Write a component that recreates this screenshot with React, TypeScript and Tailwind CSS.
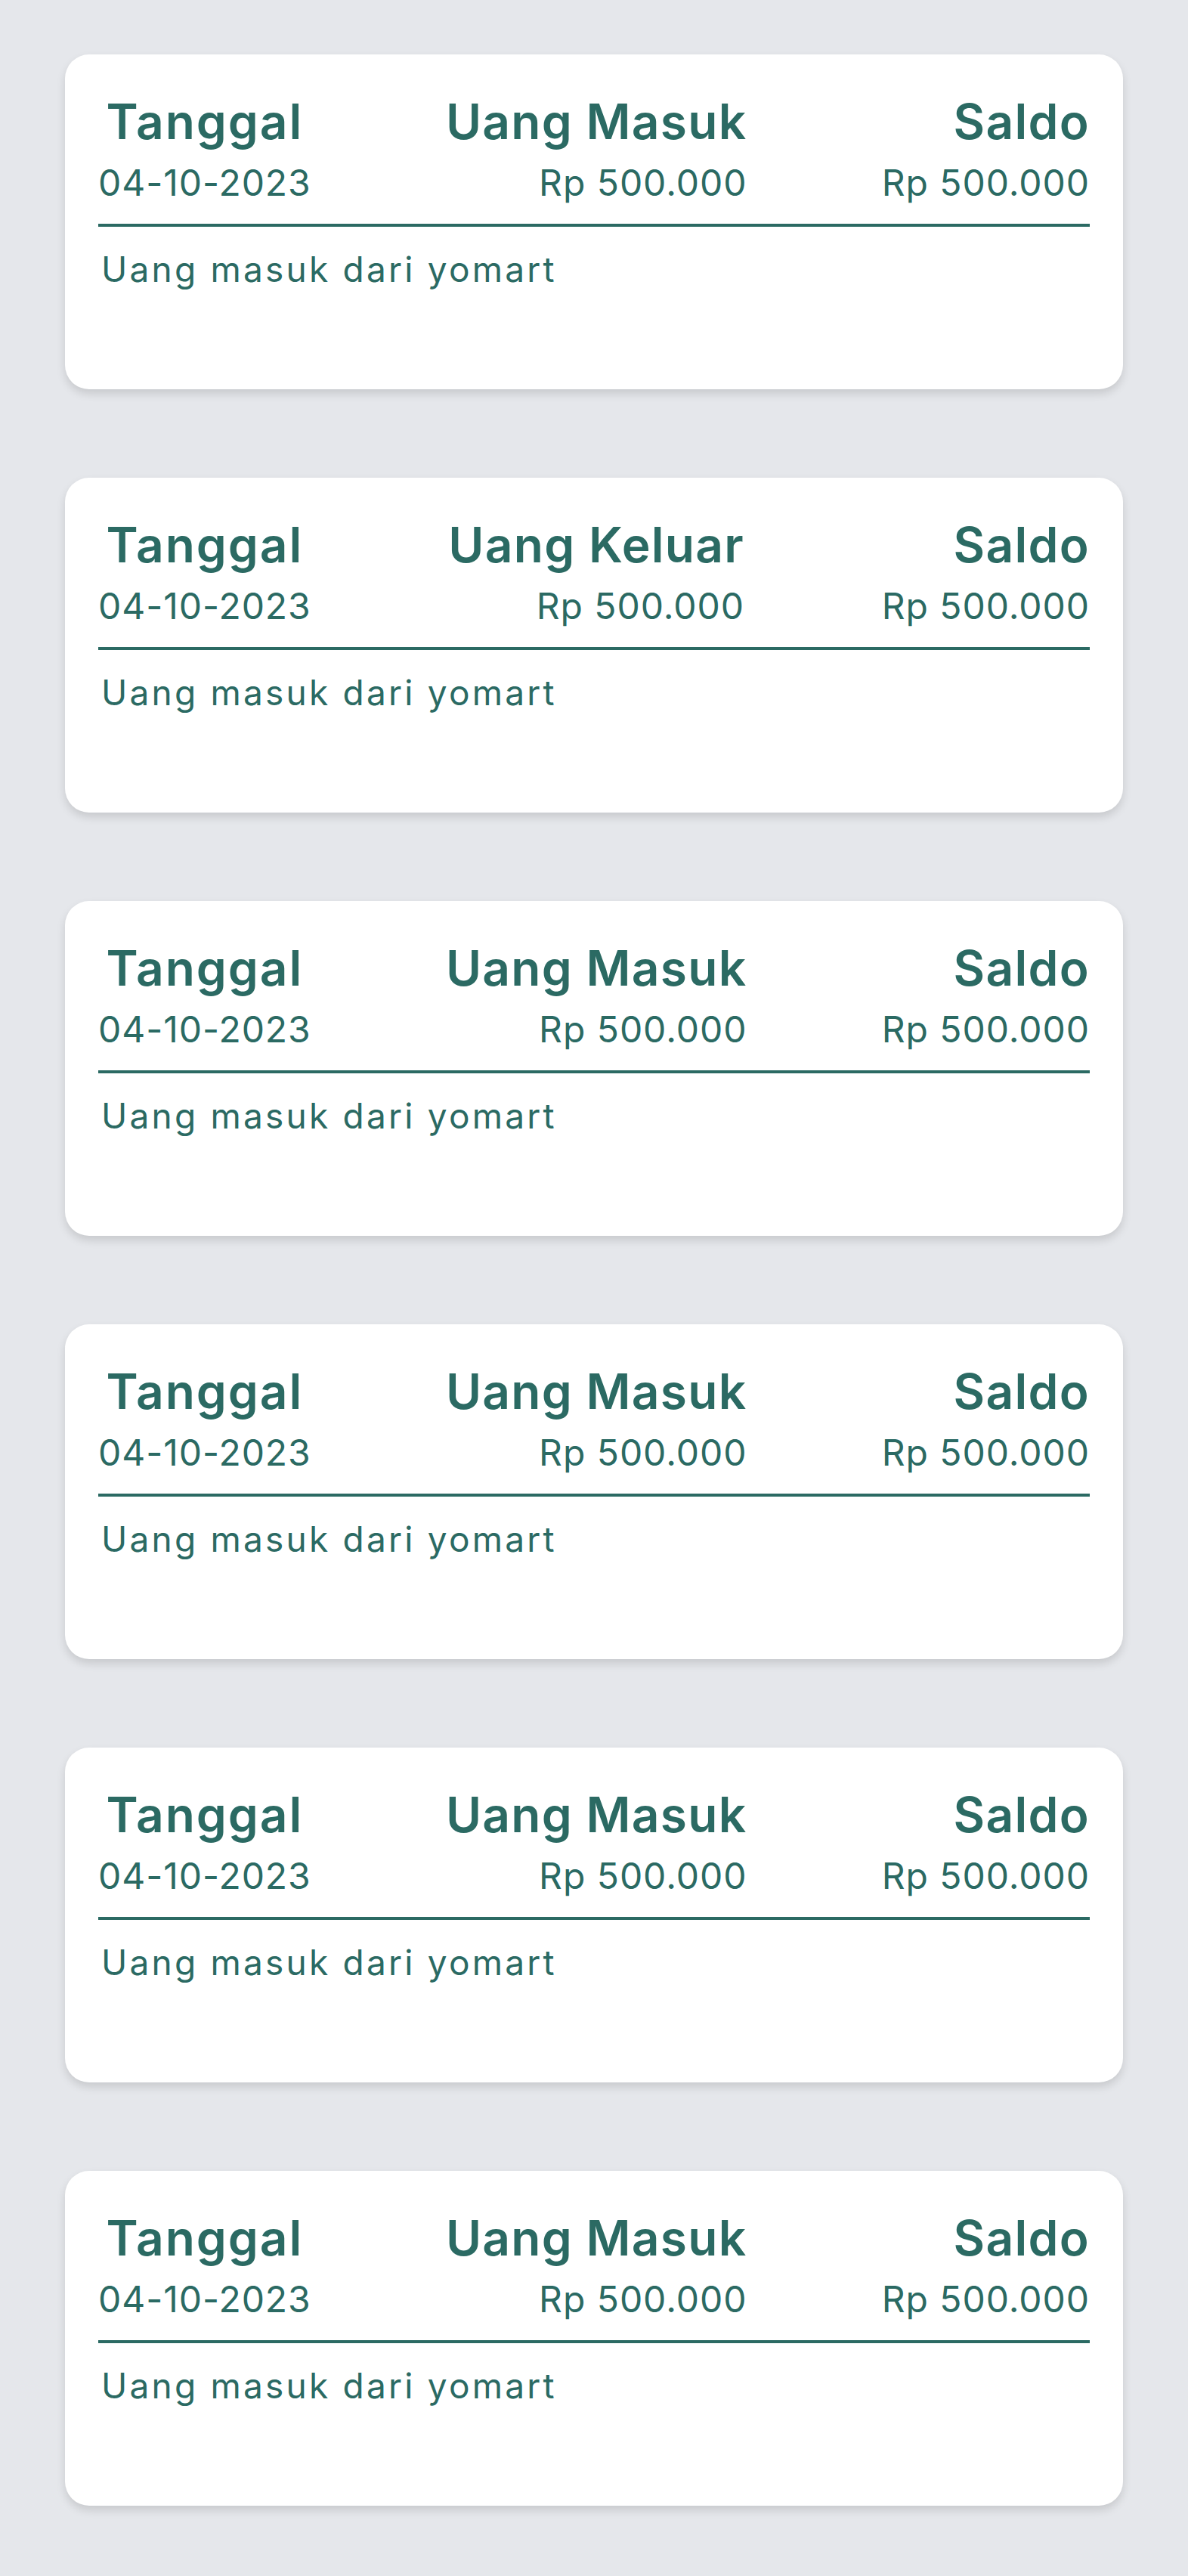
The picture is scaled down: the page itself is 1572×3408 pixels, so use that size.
import React from 'react';

const transaksi = [
  { tanggal: '04-10-2023', jenis: 'Uang Masuk', jumlah: 'Rp 500.000', saldo: 'Rp 500.000', ket: 'Uang masuk dari yomart' },
  { tanggal: '04-10-2023', jenis: 'Uang Keluar', jumlah: 'Rp 500.000', saldo: 'Rp 500.000', ket: 'Uang masuk dari yomart' },
  { tanggal: '04-10-2023', jenis: 'Uang Masuk', jumlah: 'Rp 500.000', saldo: 'Rp 500.000', ket: 'Uang masuk dari yomart' },
  { tanggal: '04-10-2023', jenis: 'Uang Masuk', jumlah: 'Rp 500.000', saldo: 'Rp 500.000', ket: 'Uang masuk dari yomart' },
  { tanggal: '04-10-2023', jenis: 'Uang Masuk', jumlah: 'Rp 500.000', saldo: 'Rp 500.000', ket: 'Uang masuk dari yomart' },
  { tanggal: '04-10-2023', jenis: 'Uang Masuk', jumlah: 'Rp 500.000', saldo: 'Rp 500.000', ket: 'Uang masuk dari yomart' },
];

const App = () => {
  return (
    <div className="min-h-screen bg-[#e5e7eb] px-[86px] pt-[72px] pb-[93px] font-['Inter','Noto_Sans',sans-serif] text-[#2b6a63]">
      <div className="flex flex-col gap-[117px]">
        {transaksi.map((item, index) => (
          <div
            key={index}
            className="h-[443px] rounded-[32px] bg-white px-[44px] pt-[57px] shadow-[0_6px_12px_rgba(0,0,0,0.13)]"
          >
            <div className="flex justify-between">
              <div className="flex flex-col items-center">
                <h1 className="text-[64px] font-semibold leading-none tracking-[0.03em]">Tanggal</h1>
                <p className="mt-[25px] text-[48px] leading-none tracking-[0.02em]">{item.tanggal}</p>
              </div>
              <div className="flex flex-col items-end">
                <h1 className="text-[64px] font-semibold leading-none tracking-[0.02em]">{item.jenis}</h1>
                <p className="mt-[25px] text-[48px] leading-none tracking-[0.02em]">{item.jumlah}</p>
              </div>
              <div className="flex flex-col items-end">
                <h1 className="text-[64px] font-semibold leading-none tracking-[0.02em]">Saldo</h1>
                <p className="mt-[25px] text-[48px] leading-none tracking-[0.02em]">{item.saldo}</p>
              </div>
            </div>
            <div className="mt-[30px] h-[4px] bg-[#2b6a63]" />
            <p className="mt-[33px] pl-[4px] text-[46px] leading-none tracking-[0.07em]">{item.ket}</p>
          </div>
        ))}
      </div>
    </div>
  );
};

export default App;
